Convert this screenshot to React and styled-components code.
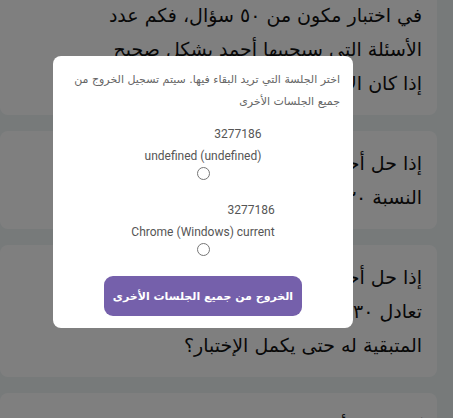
import React from 'react'
import styled, { createGlobalStyle } from 'styled-components'

const GlobalStyle = createGlobalStyle`
  html, body {
    margin: 0;
    padding: 0;
    background: #eef4f5;
    overflow: hidden;
  }
  body {
    font-family: "DejaVu Sans", "Noto Sans", sans-serif;
  }
`

const Page = styled.div`
  direction: rtl;
  height: 418px;
  overflow: hidden;
`

const List = styled.div`
  display: flex;
  flex-direction: column;
  gap: 16px;
  margin: -17px -16px 0 0;
  padding-right: 32px;
`

const Card = styled.div`
  background: #ffffff;
  border-radius: 8px;
  padding: 15px 15px;
  color: #111;
  font-size: 19px;
  line-height: 34px;
  text-align: right;
`

const Overlay = styled.div`
  position: fixed;
  inset: 0;
  background: rgba(0, 0, 0, 0.5);
  display: flex;
  align-items: flex-start;
  justify-content: flex-start;
  padding: 56px 0 0 53px;
  direction: ltr;
`

const Modal = styled.div`
  width: 300px;
  box-sizing: border-box;
  background: #ffffff;
  border-radius: 8px;
  padding: 13px 13px 12px;
  direction: rtl;
  display: flex;
  flex-direction: column;
  align-items: center;
`

const Hint = styled.p`
  margin: 0 0 10px;
  align-self: stretch;
  font-size: 11px;
  line-height: 22px;
  color: #666;
  text-align: right;
`

const Session = styled.div`
  display: flex;
  flex-direction: column;
  align-items: center;
  margin-bottom: ${p => p.last ? '20px' : '19px'};
`

const SessionInfo = styled.label`
  display: inline-block;
  text-align: right;
  font-family: Roboto, "DejaVu Sans", sans-serif;
  font-size: 12px;
  line-height: 22px;
  color: #555;
`

const Line = styled.div``

const Radio = styled.input`
  appearance: none;
  margin: 0;
  width: 13px;
  height: 13px;
  border: 1px solid #767676;
  border-radius: 50%;
  box-sizing: border-box;
  background: #fff;
`

const LogoutButton = styled.button`
  height: 40px;
  padding: 0 9px;
  border: none;
  border-radius: 9px;
  background: #7560ab;
  color: #ffffff;
  font-family: "DejaVu Sans", sans-serif;
  font-weight: bold;
  font-size: 11px;
  cursor: pointer;
`

const questions = [
  ['في اختبار مكون من ٥٠ سؤال، فكم عدد', 'الأسئلة التي سيجيبها أحمد بشكل صحيح', 'إذا كان الاختبار نسبته ٨٠٪؟'],
  ['إذا حل أحمد ٢٠ سؤالاً من أصل ٥٠ فما', 'النسبة ٣٠ المئوية التي حلها؟'],
  ['إذا حل أحمد ٢٠ سؤالاً وكانت النسبة', 'تعادل ٣٠ ٪ فكم عدد الأسئلة', 'المتبقية له حتى يكمل الإختبار؟'],
  ['كم عدد الأسئلة؟', 'في الاختبار'],
]

const sessions = [
  { id: '3277186', label: 'undefined (undefined)' },
  { id: '3277186', label: 'Chrome (Windows) current' },
]

export default function App() {
  return (
    <>
      <GlobalStyle />
      <Page>
        <List>
          {questions.map((lines, i) => (
            <Card key={i}>
              {lines.map((l, j) => (
                <React.Fragment key={j}>
                  {l}
                  {j < lines.length - 1 && <br />}
                </React.Fragment>
              ))}
            </Card>
          ))}
        </List>
        <Overlay>
          <Modal>
            <Hint>اختر الجلسة التي تريد البقاء فيها. سيتم تسجيل الخروج من جميع الجلسات الأخرى</Hint>
            {sessions.map((s, i) => (
              <Session key={i} last={i === sessions.length - 1}>
                <SessionInfo>
                  <Line>{s.id}</Line>
                  <Line>{s.label}</Line>
                </SessionInfo>
                <Radio type="radio" name="session" />
              </Session>
            ))}
            <LogoutButton>الخروج من جميع الجلسات الأخرى</LogoutButton>
          </Modal>
        </Overlay>
      </Page>
    </>
  )
}
